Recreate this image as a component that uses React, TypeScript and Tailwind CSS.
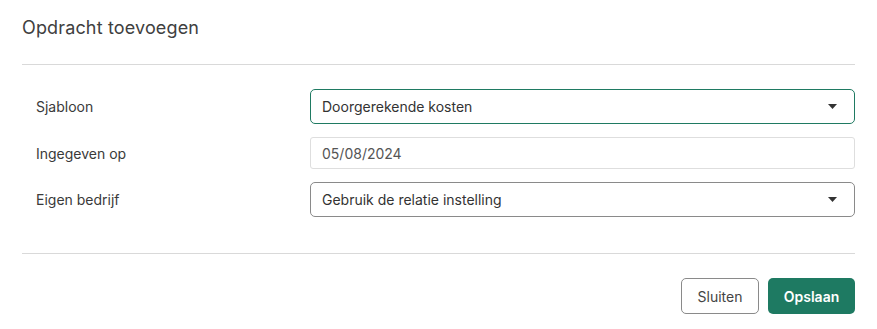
import React from "react";

function Caret() {
  return (
    <svg width="9" height="5" viewBox="0 0 9 5" className="shrink-0">
      <path d="M0 0 L9 0 L4.5 5 Z" fill="#333" />
    </svg>
  );
}

export default function App() {
  return (
    <div className="w-[877px] h-[329px] bg-white px-[22px] font-[family-name:Inter,sans-serif] text-[#333]">
      <div className="h-[65px] pt-[16px] border-b border-[#d9d9d9]">
        <h2 className="text-[18px] leading-[24px] tracking-[0.15px] text-[#404040]">Opdracht toevoegen</h2>
      </div>
      <div className="pt-[24px] pb-[36px] border-b border-[#d9d9d9]">
        <div className="grid grid-cols-[288px_1fr] gap-y-[13px] items-center text-[14px]">
          <div className="pl-[14px] text-[#3a3a3a]">Sjabloon</div>
          <div className="h-[35px] border border-[#1f7a62] rounded-[5px] flex items-center justify-between pl-[11px] pr-[17px] text-[#333]">
            <span>Doorgerekende kosten</span>
            <Caret />
          </div>
          <div className="pl-[14px] text-[#3a3a3a]">Ingegeven op</div>
          <div className="h-[32px] border border-[#dedede] rounded-[3px] flex items-center pl-[11px] text-[#555]">
            05/08/2024
          </div>
          <div className="pl-[14px] text-[#3a3a3a]">Eigen bedrijf</div>
          <div className="h-[35px] border border-[#8a8a8a] rounded-[5px] flex items-center justify-between pl-[11px] pr-[17px] text-[#333]">
            <span>Gebruik de relatie instelling</span>
            <Caret />
          </div>
        </div>
      </div>
      <div className="pt-[24px] flex justify-end gap-[9px] text-[14px]">
        <button className="h-[36px] w-[78px] border border-[#8a8a8a] rounded-[5px] text-[#444] bg-white">
          Sluiten
        </button>
        <button className="h-[36px] w-[87px] rounded-[5px] bg-[#1e7a62] text-white font-semibold">
          Opslaan
        </button>
      </div>
    </div>
  );
}
